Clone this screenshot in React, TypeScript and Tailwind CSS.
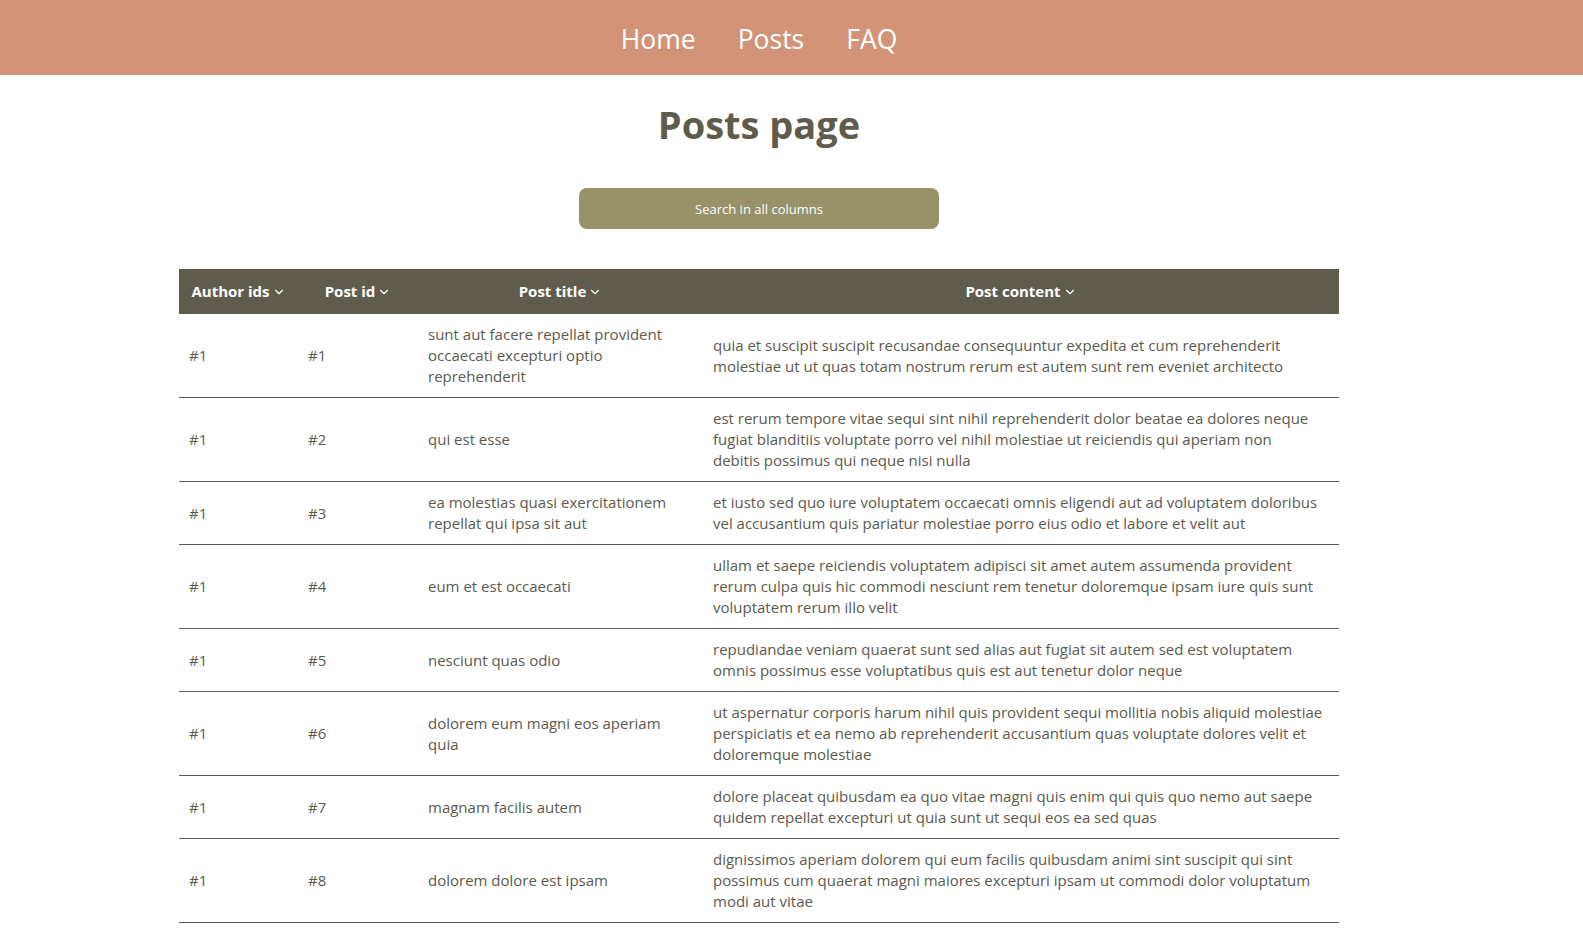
import { ChevronDown } from "lucide-react";

const posts = [
  {
    userId: 1,
    id: 1,
    title: "sunt aut facere repellat provident occaecati excepturi optio reprehenderit",
    body: "quia et suscipit suscipit recusandae consequuntur expedita et cum reprehenderit molestiae ut ut quas totam nostrum rerum est autem sunt rem eveniet architecto",
  },
  {
    userId: 1,
    id: 2,
    title: "qui est esse",
    body: "est rerum tempore vitae sequi sint nihil reprehenderit dolor beatae ea dolores neque fugiat blanditiis voluptate porro vel nihil molestiae ut reiciendis qui aperiam non\ndebitis possimus qui neque nisi nulla",
  },
  {
    userId: 1,
    id: 3,
    title: "ea molestias quasi exercitationem repellat qui ipsa sit aut",
    body: "et iusto sed quo iure voluptatem occaecati omnis eligendi aut ad voluptatem doloribus vel accusantium quis pariatur molestiae porro eius odio et labore et velit aut",
  },
  {
    userId: 1,
    id: 4,
    title: "eum et est occaecati",
    body: "ullam et saepe reiciendis voluptatem adipisci sit amet autem assumenda provident rerum culpa quis hic commodi nesciunt rem tenetur doloremque ipsam iure quis sunt voluptatem rerum illo velit",
  },
  {
    userId: 1,
    id: 5,
    title: "nesciunt quas odio",
    body: "repudiandae veniam quaerat sunt sed alias aut fugiat sit autem sed est voluptatem omnis possimus esse voluptatibus quis est aut tenetur dolor neque",
  },
  {
    userId: 1,
    id: 6,
    title: "dolorem eum magni eos aperiam quia",
    body: "ut aspernatur corporis harum nihil quis provident sequi mollitia nobis aliquid molestiae perspiciatis et ea nemo ab reprehenderit accusantium quas voluptate dolores velit et doloremque molestiae",
  },
  {
    userId: 1,
    id: 7,
    title: "magnam facilis autem",
    body: "dolore placeat quibusdam ea quo vitae magni quis enim qui quis quo nemo aut saepe quidem repellat excepturi ut quia sunt ut sequi eos ea sed quas",
  },
  {
    userId: 1,
    id: 8,
    title: "dolorem dolore est ipsam",
    body: "dignissimos aperiam dolorem qui eum facilis quibusdam animi sint suscipit qui sint possimus cum quaerat magni maiores excepturi ipsam ut commodi dolor voluptatum modi aut vitae",
  },
];

const columns = [
  { label: "Author ids", width: "w-[119px]" },
  { label: "Post id", width: "w-[120px]" },
  { label: "Post title", width: "w-[285px]" },
  { label: "Post content", width: "w-[636px]" },
];

function NavBar() {
  return (
    <header className="h-[75px] w-full bg-[#d39379]">
      <nav className="flex h-full w-[1518px] items-center justify-center gap-[42px] pt-[4px] text-[26.5px] text-white">
        <a href="#">Home</a>
        <a href="#">Posts</a>
        <a href="#">FAQ</a>
      </nav>
    </header>
  );
}

export default function App() {
  return (
    <div className="min-h-screen bg-white font-['Open_Sans',sans-serif] text-[#5b5a4d]">
      <NavBar />
      <main className="flex w-[1518px] flex-col items-center">
        <h1 className="mt-[21px] text-[38px] font-bold leading-[56px] text-[#5f5c4c]">Posts page</h1>
        <input
          type="text"
          placeholder="Search in all columns"
          className="mt-[36px] h-[41px] w-[360px] rounded-lg bg-[#97926a] text-center text-[13px] text-white outline-none placeholder:text-white"
        />
        <table className="mt-[40px] w-[1160px] table-fixed border-collapse">
          <thead>
            <tr className="h-[45px] bg-[#5f5c4d] text-white">
              {columns.map((c) => (
                <th key={c.label} className={`${c.width} px-[10px] text-center text-[15px] font-bold`}>
                  <span className="inline-flex items-center gap-[2px]">
                    {c.label}
                    <ChevronDown size={14} strokeWidth={2} />
                  </span>
                </th>
              ))}
            </tr>
          </thead>
          <tbody className="text-[15px] leading-[21px]">
            {posts.map((p) => (
              <tr key={p.id} className="border-b border-[#5a5a50]">
                <td className="px-[10px] py-[10px] align-middle">#{p.userId}</td>
                <td className="px-[10px] py-[10px] align-middle">#{p.id}</td>
                <td className="px-[10px] py-[10px] align-middle">{p.title}</td>
                <td className="whitespace-pre-line px-[10px] py-[10px] align-middle">{p.body}</td>
              </tr>
            ))}
          </tbody>
        </table>
      </main>
    </div>
  );
}
